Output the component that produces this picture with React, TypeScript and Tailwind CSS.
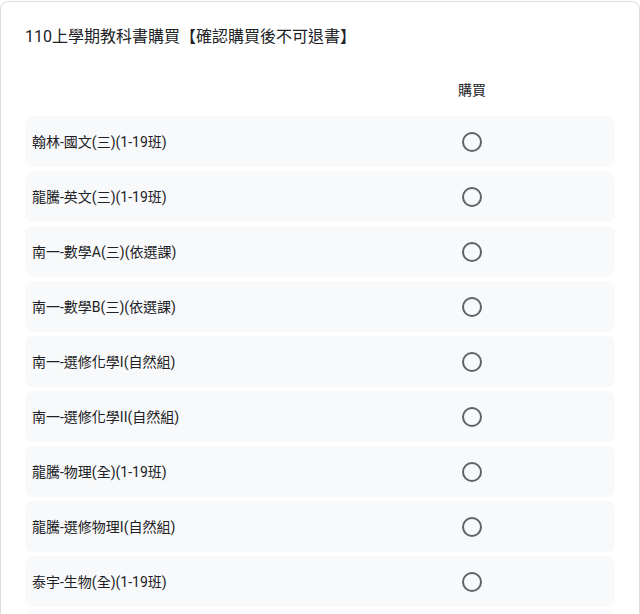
import React from 'react';

const books = [
  '翰林-國文(三)(1-19班)',
  '龍騰-英文(三)(1-19班)',
  '南一-數學A(三)(依選課)',
  '南一-數學B(三)(依選課)',
  '南一-選修化學I(自然組)',
  '南一-選修化學II(自然組)',
  '龍騰-物理(全)(1-19班)',
  '龍騰-選修物理I(自然組)',
  '泰宇-生物(全)(1-19班)',
];

const font = "font-['Roboto','Noto_Sans_CJK_TC',sans-serif]";

export default function App() {
  return (
    <div className={`h-[614px] overflow-hidden bg-white ${font}`}>
      <div className="mt-px rounded-t-lg border border-[#dadce0] px-6 pt-[23px] pb-6">
        <h2 className="text-base leading-6 text-[#202124]">110上學期教科書購買【確認購買後不可退書】</h2>

        <div className="mt-[29px] flex h-[24px] items-center">
          <div className="w-[304px]" />
          <div className="flex flex-1 justify-center text-sm text-[#202124]">購買</div>
        </div>

        <div className="mt-[14px] flex flex-col gap-1">
          {books.map(name => (
            <div key={name} className="flex h-[51px] items-center rounded-lg bg-[#f8f9fa]">
              <div className="w-[304px] pl-[7px] text-sm text-[#202124]">{name}</div>
              <div className="flex flex-1 justify-center">
                <span className="block h-5 w-5 rounded-full border-2 border-[#5f6368]" />
              </div>
            </div>
          ))}
          {/* next row, only its top edge shows */}
          <div className="h-[51px] rounded-lg bg-[#f8f9fa]" />
        </div>
      </div>
    </div>
  );
}
